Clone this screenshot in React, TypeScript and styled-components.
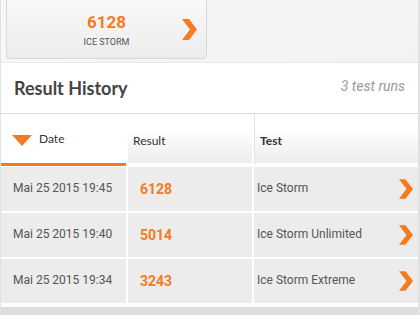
import { styled, createGlobalStyle } from 'styled-components';

const ORANGE = '#f47b20';

interface HistoryRow {
  date: string;
  score: number;
  test: string;
}

const rows: HistoryRow[] = [
  { date: 'Mai 25 2015 19:45', score: 6128, test: 'Ice Storm' },
  { date: 'Mai 25 2015 19:40', score: 5014, test: 'Ice Storm Unlimited' },
  { date: 'Mai 25 2015 19:34', score: 3243, test: 'Ice Storm Extreme' },
];

const Chevron = ({ width, height }: { width: number; height: number }) => (
  <svg width={width} height={height} viewBox="0 0 15 21">
    <polygon points="0,0 7,0 15,10.5 7,21 0,21 8,10.5" fill={ORANGE} />
  </svg>
);

const App = () => {
  return (
    <>
      <GlobalStyle />
      <Page>
        <TopArea>
          <ScoreCard>
            <span />
            <ScoreInfo>
              <ScoreValue>6128</ScoreValue>
              <ScoreLabel>ICE STORM</ScoreLabel>
            </ScoreInfo>
            <CardArrow>
              <Chevron width={15} height={21} />
            </CardArrow>
          </ScoreCard>
        </TopArea>
        <HistoryHeader>
          <HistoryTitle>Result History</HistoryTitle>
          <RunCount>3 test runs</RunCount>
        </HistoryHeader>
        <Table>
          <HeadCell $active>
            <SortTriangle />
            <HeadLabel>Date</HeadLabel>
          </HeadCell>
          <HeadCell>
            <HeadLabel $lower>Result</HeadLabel>
          </HeadCell>
          <HeadCell $divider>
            <HeadLabel $bold $lower>Test</HeadLabel>
          </HeadCell>
          {rows.map((row) => (
            <Row key={row.date}>
              <Cell>
                <CellText>{row.date}</CellText>
              </Cell>
              <Cell>
                <ScoreText>{row.score}</ScoreText>
              </Cell>
              <TestCell>
                <CellText>{row.test}</CellText>
                <Chevron width={14} height={20} />
              </TestCell>
            </Row>
          ))}
        </Table>
        <Footer />
      </Page>
    </>
  );
};

const GlobalStyle = createGlobalStyle`
  body {
    margin: 0;
    background: #ffffff;
    font-family: Roboto, "Liberation Sans", sans-serif;
    overflow: hidden;
  }
`;

const Page = styled.div`
  width: 420px;
  height: 315px;
  box-sizing: border-box;
  display: flex;
  flex-direction: column;
  border-left: 1px solid #e2e2e2;
  border-right: 2px solid #e2e2e2;
  overflow: hidden;
`;

const TopArea = styled.div`
  height: 63px;
  padding-left: 5px;
  background: linear-gradient(135deg, #f7f7f7, #f2f2f2);
  border-bottom: 1px solid #e8e8e8;
  display: flex;
  align-items: flex-end;
  padding-bottom: 3px;
  box-sizing: border-box;
`;

const ScoreCard = styled.div`
  width: 201px;
  height: 64px;
  box-sizing: border-box;
  display: grid;
  grid-template-columns: 1fr auto 1fr;
  align-items: center;
  border: 1px solid #d6d6d6;
  border-top: none;
  border-radius: 0 0 4px 4px;
  background: linear-gradient(#fafafa, #ececec);
`;

const ScoreInfo = styled.div`
  display: flex;
  flex-direction: column;
  align-items: center;
  padding-top: 6px;
  gap: 5px;
`;

const ScoreValue = styled.span`
  color: ${ORANGE};
  font-size: 17px;
  font-weight: 700;
  line-height: 20px;
`;

const ScoreLabel = styled.span`
  color: #555;
  font-size: 9px;
  line-height: 11px;
`;

const CardArrow = styled.div`
  justify-self: end;
  padding-right: 9px;
  padding-top: 5px;
  display: flex;
`;

const HistoryHeader = styled.div`
  height: 50px;
  padding: 0 13px 0 13px;
  display: flex;
  align-items: center;
  justify-content: space-between;
  border-bottom: 1px solid #dcdcdc;
  background: #fff;
`;

const HistoryTitle = styled.h2`
  margin: 0;
  font-family: Lato, "Liberation Sans", sans-serif;
  font-weight: 700;
  font-size: 18px;
  color: #444;
`;

const RunCount = styled.span`
  font-style: italic;
  font-size: 14px;
  color: #9a9a9a;
  margin-top: -4px;
`;

const Table = styled.div`
  display: grid;
  grid-template-columns: 125px 124px 1fr;
  column-gap: 2px;
  background: #fff;
`;

const HeadCell = styled.div<{ $active?: boolean; $divider?: boolean }>`
  height: 52px;
  box-sizing: border-box;
  display: flex;
  align-items: center;
  gap: 7px;
  padding: 0 0 2px ${({ $active }) => ($active ? '11px' : '5px')};
  background: ${({ $active }) =>
    $active ? '#fff' : 'linear-gradient(#ffffff 30%, #ededed)'};
  border-bottom: 3px solid ${({ $active }) => ($active ? ORANGE : 'transparent')};
  border-left: ${({ $divider }) => ($divider ? '1px solid #e4e4e4' : 'none')};
  margin-bottom: 1px;
`;

const SortTriangle = styled.span`
  width: 0;
  height: 0;
  margin-top: 5px;
  border-left: 10px solid transparent;
  border-right: 10px solid transparent;
  border-top: 11px solid ${ORANGE};
`;

const HeadLabel = styled.span<{ $bold?: boolean; $lower?: boolean }>`
  font-family: Lato, "Liberation Sans", sans-serif;
  font-size: 12px;
  font-weight: ${({ $bold }) => ($bold ? 700 : 400)};
  color: #333;
  margin-top: ${({ $lower }) => ($lower ? '5px' : '1px')};
`;

const Row = styled.div`
  display: contents;
`;

const Cell = styled.div`
  height: 44px;
  margin-bottom: 2px;
  display: flex;
  align-items: center;
  padding-left: 12px;
  background: #ececec;
`;

const TestCell = styled(Cell)`
  padding-left: 3px;
  padding-right: 5px;
  justify-content: space-between;
`;

const CellText = styled.span`
  font-size: 12px;
  color: #555;
  margin-top: -2px;
`;

const ScoreText = styled.span`
  font-size: 14px;
  font-weight: 700;
  color: ${ORANGE};
`;

const Footer = styled.div`
  flex: 1;
  margin-top: 2px;
  background: #dedede;
`;

export default App;
